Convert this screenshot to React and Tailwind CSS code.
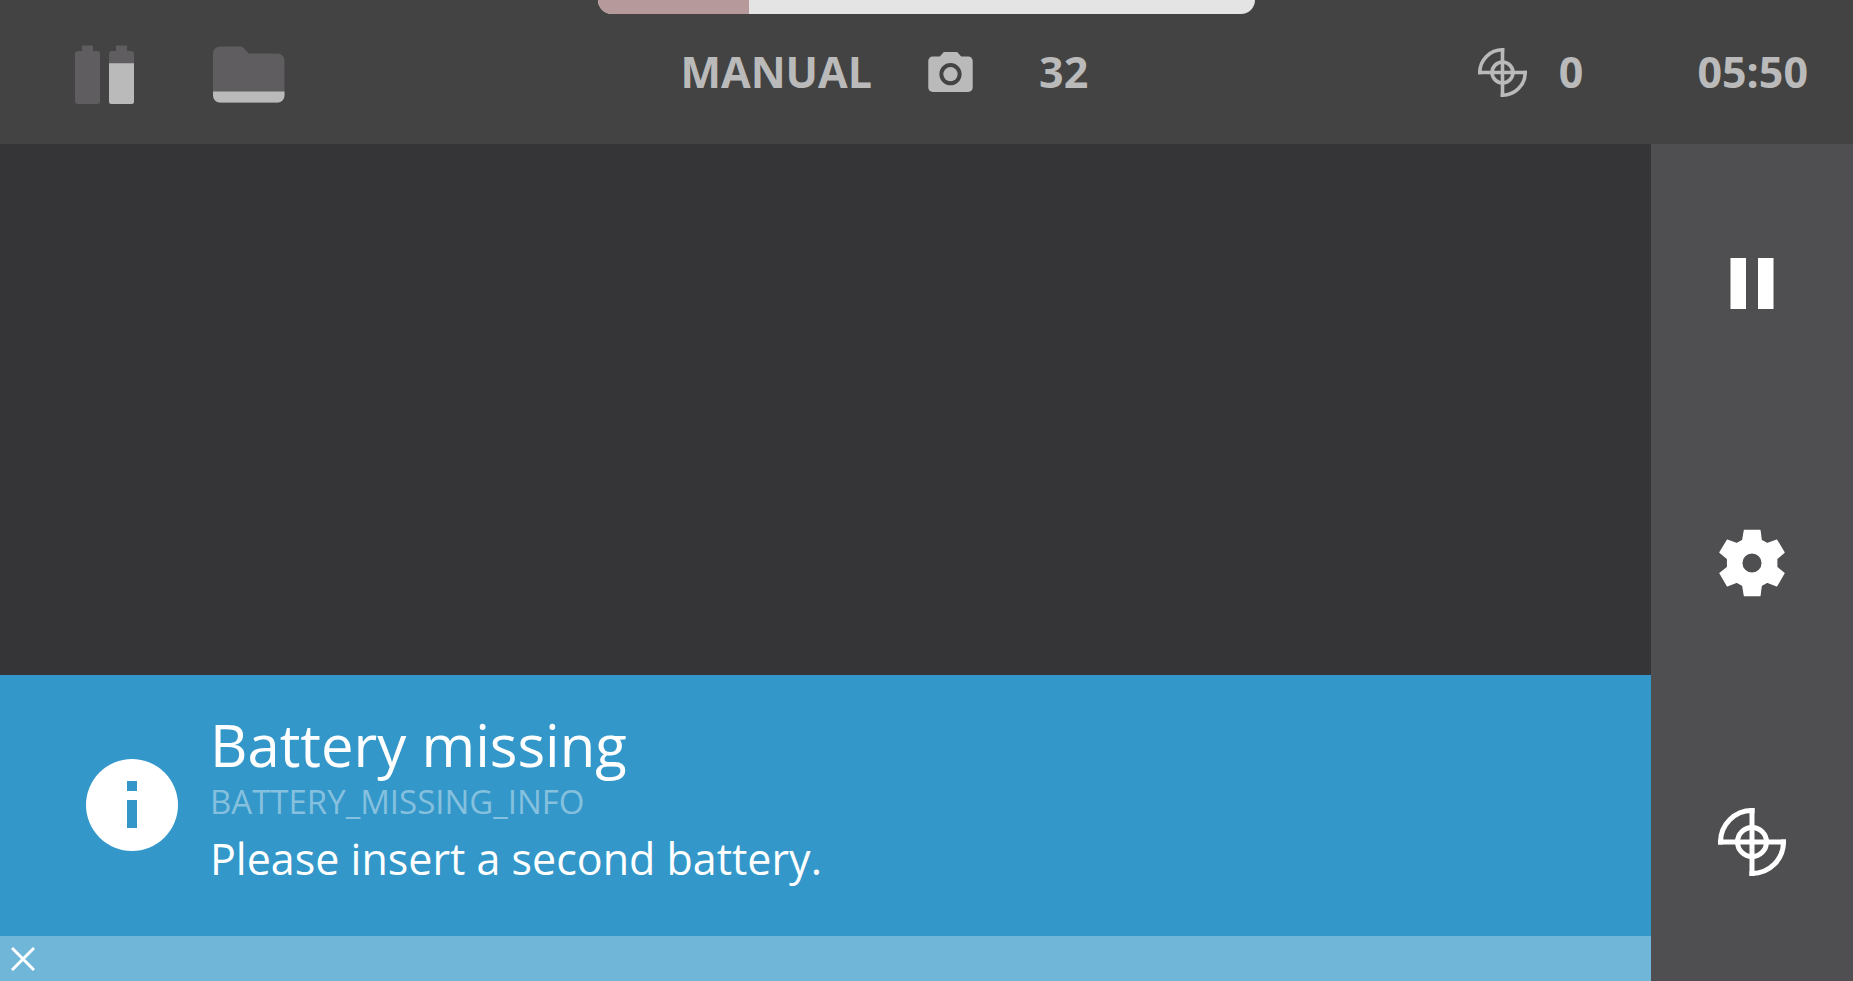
import { useState } from 'react';

const PROGRESS = 23;

// Battery with a level between 0 and 1
function BatteryIcon({ level }) {
    const top = 59 - 53 * level;

    return (
        <svg viewBox="0 0 25 59" className="w-[25px] h-[59px]" aria-hidden="true">
            <path d="M7 0.5h11V6H22a3 3 0 0 1 3 3v47a3 3 0 0 1-3 3H3a3 3 0 0 1-3-3V9a3 3 0 0 1 3-3h4z" fill="#5f5d5f" />
            {level > 0 && (
                <path d={`M0 ${top}h25V56.5a2.5 2.5 0 0 1-2.5 2.5h-20A2.5 2.5 0 0 1 0 56.5z`} fill="#bababa" />
            )}
        </svg>
    );
}

function StorageIcon() {
    return (
        <svg viewBox="0 0 72 57" className="w-[72px] h-[57px]" aria-hidden="true">
            <path d="M7 0.5h22l7 7h28.500a7 7 0 0 1 7 7V50a7 7 0 0 1-7 7H7a7 7 0 0 1-7-7V7.500a7 7 0 0 1 7-7z" fill="#5f5d5f" />
            <path d="M0 45.500h71.500v4a7 7 0 0 1-7 7H7a7 7 0 0 1-7-7z" fill="#bababa" />
        </svg>
    );
}

function CameraIcon({ className }) {
    return (
        <svg viewBox="2 2 20 18" className={className} fill="currentColor" aria-hidden="true">
            <circle cx="12" cy="12" r="3.2" />
            <path d="M9 2L7.170 4H4c-1.100 0-2 .9-2 2v12c0 1.100.9 2 2 2h16c1.100 0 2-.9 2-2V6c0-1.100-.9-2-2-2h-3.170L15 2H9zm3 15c-2.760 0-5-2.240-5-5s2.240-5 5-5 5 2.240 5 5-2.240 5-5 5z" />
        </svg>
    );
}

function TargetIcon({ className }) {
    return (
        <svg viewBox="0 0 68 68" className={className} fill="none" stroke="currentColor" strokeWidth="5" aria-hidden="true">
            <path d="M34 0v68M0 34h68" />
            <path d="M2.500 36.500V34A31.500 31.500 0 0 1 34 2.500h2.500" />
            <path d="M65.500 31.500V34A31.500 31.500 0 0 1 34 65.500h-2.500" />
            <circle cx="34" cy="34" r="14.500" />
        </svg>
    );
}

function PauseIcon() {
    return (
        <svg viewBox="0 0 44 51" className="w-[44px] h-[51px]" fill="currentColor" aria-hidden="true">
            <path d="M0.500 0H16v51H0.500zM28 0h15.500v51H28z" />
        </svg>
    );
}

function GearIcon() {
    return (
        <svg viewBox="-100 -102 200 204" className="w-[66px] h-[68px]" fill="currentColor" stroke="currentColor" strokeWidth="4" strokeLinejoin="round" aria-hidden="true">
            <path
                fillRule="evenodd"
                d="M-23 -99H24L28 -69L46 -59L75 -69L97 -32L75 -13V13L97 31L75 69L46 58L28 68L24 99H-23L-28 68L-46 58L-75 69L-97 31L-74 13V-13L-97 -32L-75 -69L-46 -59L-28 -69ZM31 0A31 31 0 1 0 -31 0A31 31 0 1 0 31 0Z"
            />
        </svg>
    );
}

function InfoIcon() {
    return (
        <svg viewBox="0 0 92 92" className="w-[92px] h-[92px] shrink-0" aria-hidden="true">
            <circle cx="46" cy="46" r="46" fill="#fff" />
            <path d="M41 22h10v10H41zM41 41h10v28H41z" fill="#3397c9" />
        </svg>
    );
}

function StatusBar() {
    return (
        <header className="relative grid grid-cols-[11fr_11fr_8fr] items-center h-36 bg-[#434343] text-[#bababa] text-[43px] leading-[60px] font-bold">
            <div
                role="progressbar"
                aria-label="Progress"
                aria-valuenow={PROGRESS}
                className="absolute top-0 inset-x-0 mx-auto w-[657px] h-3.5 rounded-b-[14px] overflow-hidden bg-[#e4e4e4]"
            >
                <div className="h-full bg-[#b5999b]" style={{ width: `${PROGRESS}%` }} />
            </div>

            <div className="flex items-center pl-[75px] pt-[5px]">
                <div className="flex gap-[9px]">
                    <BatteryIcon level={0} />
                    <BatteryIcon level={0.77} />
                </div>
                <div className="ml-[79px]">
                    <StorageIcon />
                </div>
            </div>

            <div className="flex items-center pl-px">
                <span>MANUAL</span>
                <CameraIcon className="ml-14 w-[45px] h-10" />
                <span className="ml-[66px]">32</span>
            </div>

            <div className="flex items-center justify-end pr-[45px]">
                <TargetIcon className="size-[49px]" />
                <span className="ml-8">0</span>
                <time className="ml-[114px]">05:50</time>
            </div>
        </header>
    );
}

function Alert({ onClose }) {
    return (
        <section role="alert" className="text-white">
            <div className="flex items-center gap-8 pl-[86px] pt-[37px] pb-[38px] bg-[#3397c9]">
                <InfoIcon />
                <div className="pt-px pb-[7px]">
                    <h1 className="text-[58px] leading-[64px]">Battery missing</h1>
                    <p className="text-[33px] leading-[50px] text-[#85c0de]">BATTERY_MISSING_INFO</p>
                    <p className="text-[43px] leading-[64px]">Please insert a second battery.</p>
                </div>
            </div>
            <div className="flex items-center h-[45px] pl-[11px] bg-[#6fb6d9]">
                <button type="button" aria-label="Close" onClick={onClose}>
                    <svg viewBox="0 0 24 24" className="size-6" stroke="currentColor" strokeWidth="3" aria-hidden="true">
                        <path d="M1 1l22 22M23 1L1 23" />
                    </svg>
                </button>
            </div>
        </section>
    );
}

export default function App() {
    const [showAlert, setShowAlert] = useState(true);

    return (
        <div className="flex flex-col min-h-screen bg-[#353537] font-['Open_Sans',sans-serif]">
            <StatusBar />

            <div className="flex flex-1">
                <main className="flex flex-1 flex-col justify-end">
                    {showAlert && <Alert onClose={() => setShowAlert(false)} />}
                </main>

                {/* Side controls */}
                <nav className="grid grid-rows-3 w-[202px] bg-[#4f4f51] text-white">
                    <button type="button" aria-label="Pause" className="flex items-center justify-center">
                        <PauseIcon />
                    </button>
                    <button type="button" aria-label="Settings" className="flex items-center justify-center">
                        <GearIcon />
                    </button>
                    <button type="button" aria-label="Target" className="flex items-center justify-center">
                        <TargetIcon className="size-[68px]" />
                    </button>
                </nav>
            </div>
        </div>
    );
}
